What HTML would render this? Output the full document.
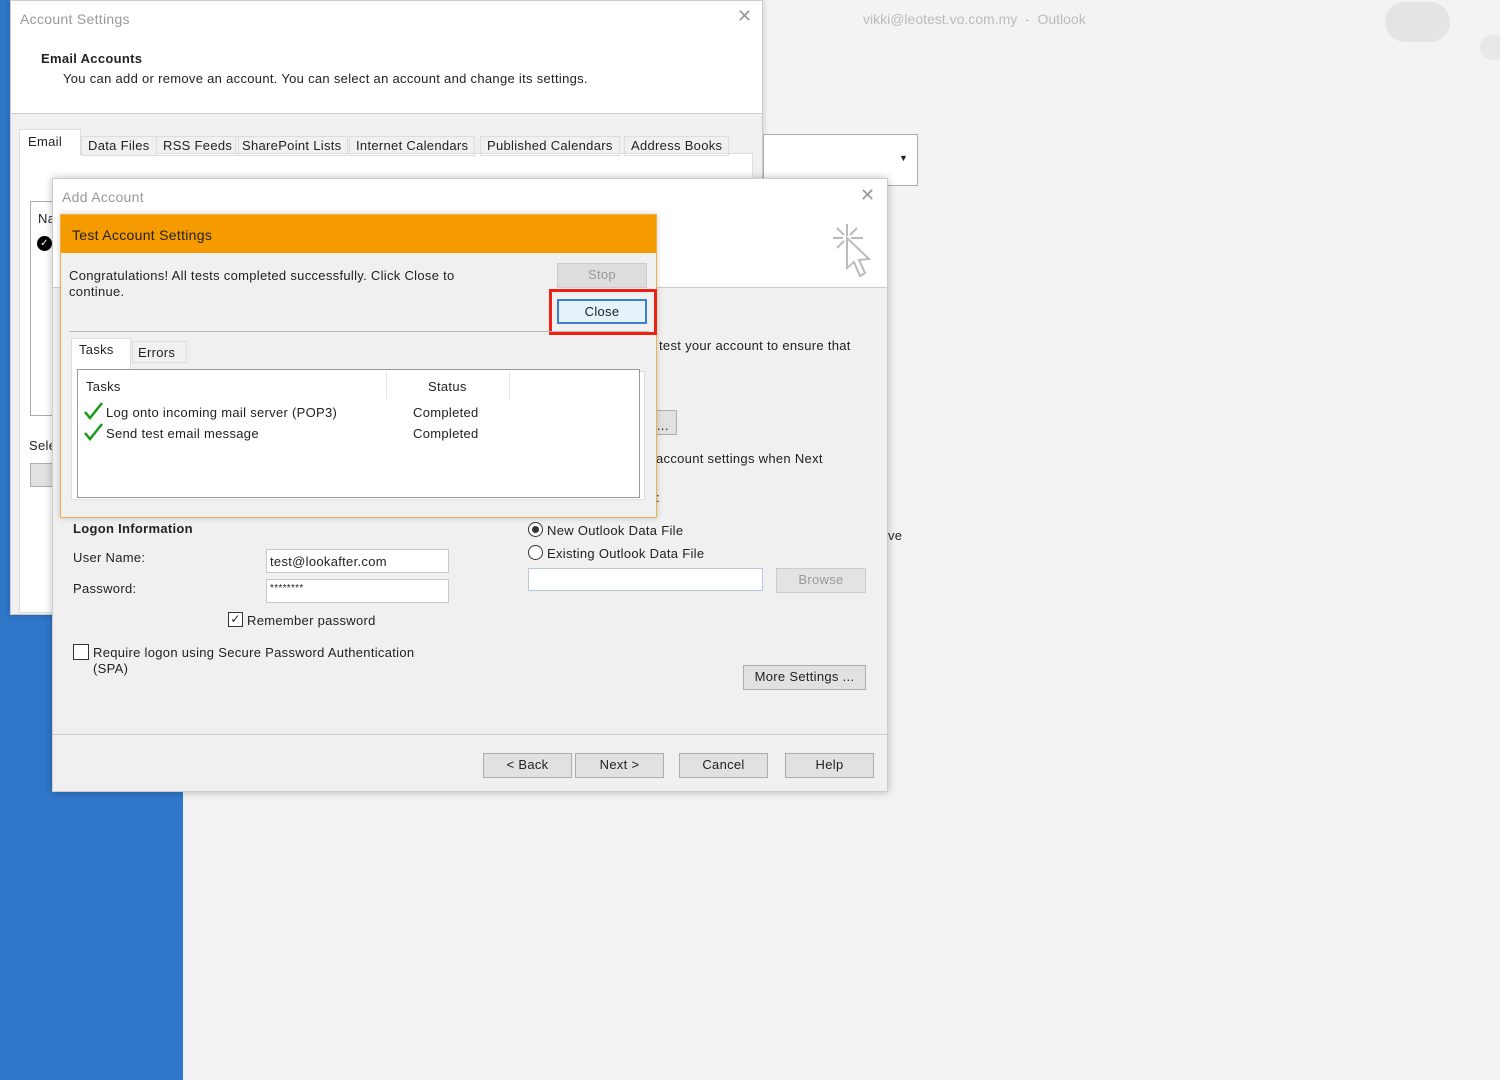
<!DOCTYPE html>
<html><head><style>
*{margin:0;padding:0;box-sizing:border-box}
body{width:1500px;height:1080px;background:#f3f3f3;font-family:"Liberation Sans",sans-serif;font-size:13px;letter-spacing:0.3px;color:#222;position:relative;overflow:hidden}
.a{position:absolute}
.btn{position:absolute;background:#e1e1e1;border:1px solid #adadad;text-align:center;font-size:13px;line-height:22px;color:#222}
.inp{position:absolute;background:#fff;border:1px solid #c8c8c8}
.t{position:absolute;white-space:nowrap}
</style></head><body>
<div class="a" style="left:0;top:0;width:183px;height:1080px;background:#2f77c9"></div>
<div class="t" style="left:863px;top:11px;color:#bbb;font-size:14px;letter-spacing:0">vikki@leotest.vo.com.my&nbsp; - &nbsp;Outlook</div>
<div class="a" style="left:1385px;top:2px;width:65px;height:40px;border-radius:30px;background:#e4e4e4"></div>
<div class="a" style="left:1480px;top:35px;width:40px;height:25px;border-radius:20px;background:#e8e8e8"></div>

<!-- Account settings -->
<div class="a" style="left:10px;top:0;width:753px;height:615px;background:#f0f0f0;border:1px solid #ccc;box-shadow:0 0 6px rgba(0,0,0,.2)">
 <div class="a" style="left:0;top:0;width:751px;height:113px;background:#fff;border-bottom:1px solid #ccc"></div>
 <div class="t" style="left:9px;top:10px;color:#999;font-size:14px">Account Settings</div>
 <div class="t" style="left:726px;top:5px;color:#999;font-size:18px">✕</div>
 <div class="t" style="left:30px;top:50px;font-weight:bold">Email Accounts</div>
 <div class="t" style="left:52px;top:70px">You can add or remove an account. You can select an account and change its settings.</div>
 <div class="a" style="left:8px;top:152px;width:734px;height:460px;background:#fff;border:1px solid #ddd"></div>
 <div class="a" style="left:8px;top:128px;width:62px;height:26px;background:#fff;border:1px solid #ddd;border-bottom:none"></div>
 <div class="t" style="left:17px;top:133px">Email</div>
 <div class="t" style="left:70px;top:135px;background:#f0f0f0;border:1px solid #ddd;padding:0 6px;line-height:18px">Data Files</div>
 <div class="t" style="left:145px;top:135px;border:1px solid #ddd;padding:0 6px;line-height:18px">RSS Feeds</div>
 <div class="t" style="left:224px;top:135px;border:1px solid #ddd;padding:0 6px;line-height:18px">SharePoint Lists</div>
 <div class="t" style="left:338px;top:135px;border:1px solid #ddd;padding:0 6px;line-height:18px">Internet Calendars</div>
 <div class="t" style="left:469px;top:135px;border:1px solid #ddd;padding:0 6px;line-height:18px">Published Calendars</div>
 <div class="t" style="left:613px;top:135px;border:1px solid #ddd;padding:0 6px;line-height:18px">Address Books</div>
 <div class="a" style="left:19px;top:200px;width:30px;height:215px;border:1px solid #aaa;background:#fff"></div>
 <div class="t" style="left:27px;top:210px">Na</div>
 <div class="a" style="left:26px;top:235px;width:15px;height:15px;border-radius:50%;background:#000;color:#fff;font-size:10px;line-height:15px;text-align:center">✓</div>
 <div class="t" style="left:18px;top:437px">Sele</div>
 <div class="a" style="left:19px;top:462px;width:30px;height:24px;background:#e1e1e1;border:1px solid #adadad"></div>
</div>
<div class="a" style="left:763px;top:134px;width:155px;height:52px;background:#fff;border:1px solid #aaa"></div>
<div class="t" style="left:899px;top:153px;font-size:9px">▼</div>

<!-- Add account -->
<div class="a" style="left:52px;top:178px;width:836px;height:614px;background:#f0f0f0;border:1px solid #ccc;box-shadow:0 0 8px rgba(0,0,0,.25)">
 <div class="a" style="left:0;top:0;width:834px;height:109px;background:#fff;border-bottom:1px solid #ccc"></div>
 <div class="t" style="left:9px;top:10px;color:#999;font-size:14px">Add Account</div>
 <div class="t" style="left:807px;top:6px;color:#999;font-size:18px">✕</div>
 <svg class="a" style="left:775px;top:40px" width="45" height="65" viewBox="0 0 45 65"><g stroke="#bbb" stroke-width="2" fill="none"><path d="M19 5v12M5 19h10M23 19h12M9 9l7 7M29 9l-7 7M9 29l7-7"/><path d="M19 19v30l7-6 6 14 5-3-6-13 10-1z" fill="#fff"/></g></svg>
 <div class="t" style="left:606px;top:159px">test your account to ensure that</div>
 <div class="a" style="left:602px;top:231px;width:22px;height:25px;background:#e1e1e1;border:1px solid #adadad"></div>
 <div class="t" style="left:604px;top:239px">...</div>
 <div class="t" style="left:603px;top:272px">account settings when Next</div>
 <div class="t" style="left:603px;top:311px">:</div>
 <div class="t" style="left:835px;top:349px">ve</div>
 <div class="t" style="left:20px;top:342px;font-weight:bold">Logon Information</div>
 <div class="t" style="left:20px;top:371px">User Name:</div>
 <div class="inp" style="left:213px;top:370px;width:183px;height:24px"></div>
 <div class="t" style="left:217px;top:375px">test@lookafter.com</div>
 <div class="t" style="left:20px;top:402px">Password:</div>
 <div class="inp" style="left:213px;top:400px;width:183px;height:24px"></div>
 <div class="t" style="left:217px;top:404px;font-size:10px">********</div>
 <div class="a" style="left:175px;top:433px;width:15px;height:15px;border:1px solid #333;background:#fff;font-size:12px;line-height:13px;text-align:center">✓</div>
 <div class="t" style="left:194px;top:434px">Remember password</div>
 <div class="a" style="left:20px;top:465px;width:16px;height:16px;border:1px solid #333;background:#fff"></div>
 <div class="t" style="left:40px;top:466px">Require logon using Secure Password Authentication</div>
 <div class="t" style="left:40px;top:482px">(SPA)</div>
 <div class="a" style="left:475px;top:343px;width:15px;height:15px;border:1px solid #333;border-radius:50%;background:#fff"><div class="a" style="left:3px;top:3px;width:7px;height:7px;border-radius:50%;background:#333"></div></div>
 <div class="t" style="left:494px;top:344px">New Outlook Data File</div>
 <div class="a" style="left:475px;top:366px;width:15px;height:15px;border:1px solid #333;border-radius:50%;background:#fff"></div>
 <div class="t" style="left:494px;top:367px">Existing Outlook Data File</div>
 <div class="inp" style="left:475px;top:389px;width:235px;height:23px;border-color:#b8c8e0"></div>
 <div class="btn" style="left:723px;top:389px;width:90px;height:25px;color:#999;background:#e3e3e3;border-color:#ccc">Browse</div>
 <div class="btn" style="left:690px;top:486px;width:123px;height:25px">More Settings ...</div>
 <div class="a" style="left:0;top:555px;width:834px;height:1px;background:#ccc"></div>
 <div class="btn" style="left:430px;top:574px;width:89px;height:25px">&lt; Back</div>
 <div class="btn" style="left:522px;top:574px;width:89px;height:25px">Next &gt;</div>
 <div class="btn" style="left:626px;top:574px;width:89px;height:25px">Cancel</div>
 <div class="btn" style="left:732px;top:574px;width:89px;height:25px">Help</div>
</div>

<!-- Test account settings -->
<div class="a" style="left:60px;top:214px;width:597px;height:304px;background:#f0f0f0;border:1px solid #f0b050;box-shadow:0 0 6px rgba(0,0,0,.2)">
 <div class="a" style="left:0;top:0;width:595px;height:38px;background:#f59b00"></div>
 <div class="t" style="left:11px;top:12px;font-size:14px;color:#222">Test Account Settings</div>
 <div class="t" style="left:8px;top:53px">Congratulations! All tests completed successfully. Click Close to</div>
 <div class="t" style="left:8px;top:69px">continue.</div>
 <div class="btn" style="left:496px;top:48px;width:90px;height:25px;color:#999;background:#ddd;border-color:#ccc">Stop</div>
 <div class="a" style="left:488px;top:74px;width:108px;height:46px;border:3px solid #f02010"></div>
 <div class="btn" style="left:496px;top:84px;width:90px;height:25px;border:2px solid #3c7fd0;background:#e5f1fb">Close</div>
 <div class="a" style="left:8px;top:116px;width:580px;height:1px;background:#bbb"></div>
 <div class="a" style="left:10px;top:156px;width:574px;height:129px;background:#fff;border:1px solid #ddd"></div>
 <div class="a" style="left:10px;top:123px;width:60px;height:34px;background:#fff;border:1px solid #ddd;border-bottom:none"></div>
 <div class="t" style="left:18px;top:127px">Tasks</div>
 <div class="a" style="left:71px;top:126px;width:55px;height:22px;border:1px solid #ddd"></div>
 <div class="t" style="left:77px;top:130px">Errors</div>
 <div class="a" style="left:16px;top:154px;width:563px;height:129px;background:#fff;border:1px solid #999"></div>
 <div class="a" style="left:325px;top:156px;width:1px;height:28px;background:#e5e5e5"></div>
 <div class="a" style="left:448px;top:156px;width:1px;height:28px;background:#e5e5e5"></div>
 <div class="t" style="left:25px;top:164px">Tasks</div>
 <div class="t" style="left:367px;top:164px">Status</div>
 <svg class="a" style="left:22px;top:186px" width="22" height="20"><path d="M2 11l5 6L19 2" stroke="#1a9a1a" stroke-width="2.5" fill="none"/></svg>
 <div class="t" style="left:45px;top:190px">Log onto incoming mail server (POP3)</div>
 <div class="t" style="left:352px;top:190px">Completed</div>
 <svg class="a" style="left:22px;top:207px" width="22" height="20"><path d="M2 11l5 6L19 2" stroke="#1a9a1a" stroke-width="2.5" fill="none"/></svg>
 <div class="t" style="left:45px;top:211px">Send test email message</div>
 <div class="t" style="left:352px;top:211px">Completed</div>
</div>
</body></html>
